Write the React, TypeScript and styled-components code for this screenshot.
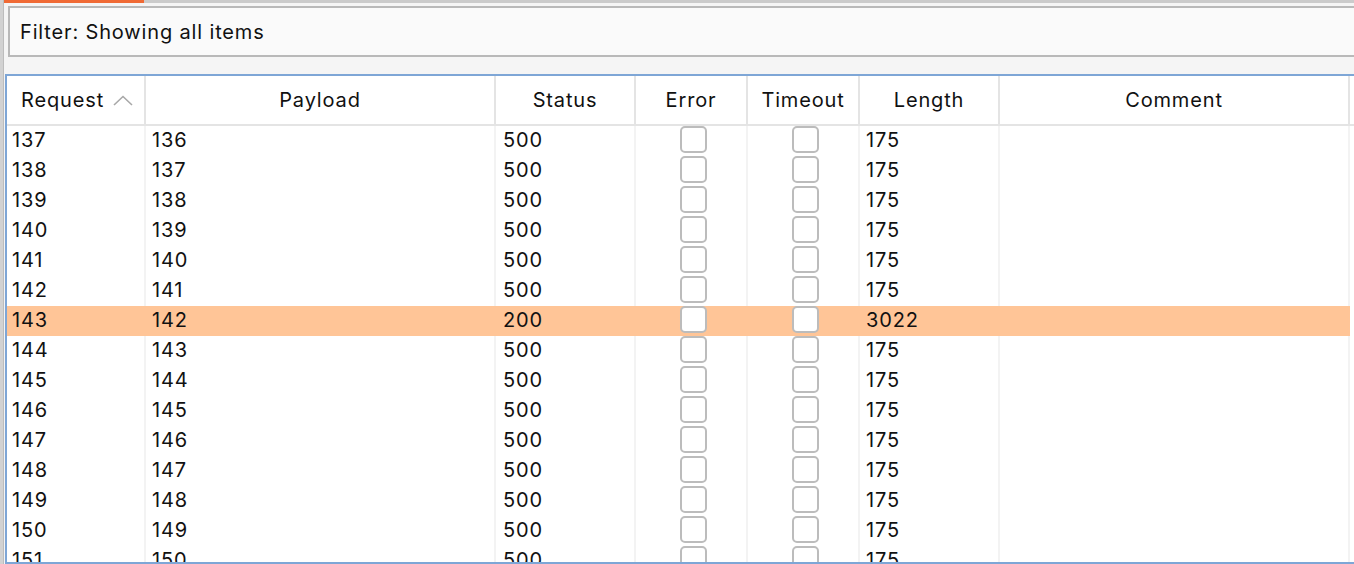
import { createGlobalStyle } from "styled-components";
import styled from "styled-components";

const GlobalStyle = createGlobalStyle`
  html, body {
    margin: 0;
    padding: 0;
    background: #f4f4f4;
    overflow: hidden;
  }
  body {
    font-family: Inter, "Liberation Sans", Arial, sans-serif;
    letter-spacing: 0.85px;
    color: #111;
  }
`;

const rows = Array.from({ length: 15 }, (_, i) => {
  const req = 137 + i;
  const hit = req === 143;
  return {
    request: req,
    payload: req - 1,
    status: hit ? 200 : 500,
    length: hit ? 3022 : 175,
    hit,
  };
});

const columns = "139px 350px 140px 112px 112px 140px 350px 1fr";

const Page = styled.div`
  display: flex;
  width: 1354px;
  height: 564px;
  overflow: hidden;
`;

const LeftEdge = styled.div`
  width: 3px;
  flex: none;
  background: #d2d2d2;
  border-right: 1px solid #bdbdbd;
`;

const Main = styled.div`
  flex: 1;
  display: flex;
  flex-direction: column;
  min-width: 0;
  background: #f5f5f5;
`;

const TabLine = styled.div`
  display: flex;
  height: 3px;
  flex: none;
  background: #cbcbcb;
`;

const ActiveTab = styled.div`
  width: 140px;
  background: #f06a35;
`;

const FilterBar = styled.div`
  box-sizing: border-box;
  height: 51px;
  margin: 3px -20px 0 4px;
  padding-left: 10px;
  display: flex;
  align-items: center;
  background: #fafafa;
  border: 2px solid #b9b9b9;
  font-size: 20px;
  flex: none;
`;

const Table = styled.div`
  margin: 17px -10px 0 1px;
  flex: 1;
  display: flex;
  flex-direction: column;
  background: #fff;
  border-top: 2px solid #7ea6d6;
  border-left: 2px solid #7ea6d6;
  border-bottom: 2px solid #7ea6d6;
  overflow: hidden;
`;

const HeaderRow = styled.div`
  display: grid;
  grid-template-columns: ${columns};
  height: 50px;
  flex: none;
  border-bottom: 2px solid #e4e4e4;
  box-sizing: border-box;
`;

const HeadCell = styled.div<{ $left?: boolean }>`
  display: flex;
  align-items: center;
  justify-content: ${(p) => (p.$left ? "flex-start" : "center")};
  padding-left: ${(p) => (p.$left ? "14px" : "0")};
  gap: 9px;
  font-size: 20px;
  border-right: 2px solid #e4e4e4;
`;

const Body = styled.div`
  flex: 1;
  overflow: hidden;
`;

const Row = styled.div<{ $hit: boolean }>`
  display: grid;
  grid-template-columns: ${columns};
  height: 30px;
  background: ${(p) => (p.$hit ? "#ffc597" : "#fff")};
`;

const Cell = styled.div<{ $hit: boolean; $pad?: number }>`
  display: flex;
  align-items: center;
  padding: 0 0 2px ${(p) => p.$pad ?? 6}px;
  font-size: 20px;
  line-height: 28px;
  border-right: 2px solid ${(p) => (p.$hit ? "transparent" : "#f3f3f3")};
`;

const CheckCell = styled.div<{ $hit: boolean }>`
  display: flex;
  justify-content: center;
  align-items: flex-start;
  padding-left: 4px;
  border-right: 2px solid ${(p) => (p.$hit ? "transparent" : "#f3f3f3")};
`;

const Check = styled.span`
  box-sizing: border-box;
  width: 27px;
  height: 27px;
  border: 2px solid #bcbcbc;
  border-radius: 5px;
  background: #fff;
`;

const Filler = styled.div`
  background: #fff;
`;

function SortChevron() {
  return (
    <svg width="20" height="11" viewBox="0 0 20 11">
      <polyline
        points="1,10 10,1.5 19,10"
        fill="none"
        stroke="#a8a8a8"
        strokeWidth="1.6"
      />
    </svg>
  );
}

export default function App() {
  return (
    <>
      <GlobalStyle />
      <Page>
        <LeftEdge />
        <Main>
          <TabLine>
            <ActiveTab />
          </TabLine>
          <FilterBar>Filter: Showing all items</FilterBar>
          <Table>
            <HeaderRow>
              <HeadCell $left>
                Request
                <SortChevron />
              </HeadCell>
              <HeadCell>Payload</HeadCell>
              <HeadCell>Status</HeadCell>
              <HeadCell>Error</HeadCell>
              <HeadCell>Timeout</HeadCell>
              <HeadCell>Length</HeadCell>
              <HeadCell>Comment</HeadCell>
              <Filler />
            </HeaderRow>
            <Body>
              {rows.map((r) => (
                <Row key={r.request} $hit={r.hit}>
                  <Cell $hit={r.hit} $pad={5}>{r.request}</Cell>
                  <Cell $hit={r.hit}>{r.payload}</Cell>
                  <Cell $hit={r.hit} $pad={7}>{r.status}</Cell>
                  <CheckCell $hit={r.hit}>
                    <Check />
                  </CheckCell>
                  <CheckCell $hit={r.hit}>
                    <Check />
                  </CheckCell>
                  <Cell $hit={r.hit}>{r.length}</Cell>
                  <Cell $hit={r.hit} />
                  <Filler />
                </Row>
              ))}
            </Body>
          </Table>
        </Main>
      </Page>
    </>
  );
}
